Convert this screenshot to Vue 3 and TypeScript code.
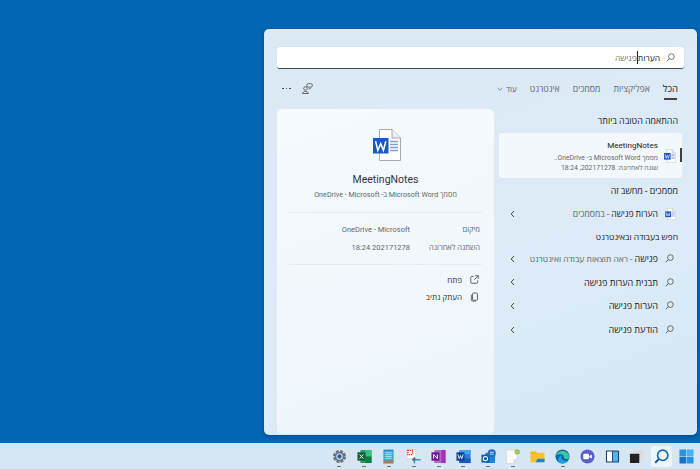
<script setup lang="ts">
interface SearchRow {
  id: number
  label: string
  hint?: string
}

const webRows: SearchRow[] = [
  { id: 1, label: 'פגישה', hint: ' - ראה תוצאות עבודה ואינטרנט' },
  { id: 2, label: 'תבנית הערות פגישה' },
  { id: 3, label: 'הערות פגישה' },
  { id: 4, label: 'הודעת פגישה' }
]

const tabs = ['אפליקציות', 'מסמכים', 'אינטרנט']
</script>

<template>
  <div class="screen">
    <svg class="defs" width="0" height="0" aria-hidden="true">
      <symbol id="doc" viewBox="0 0 28 32">
        <path d="M6.5 .5H19L27.5 9V31.5H6.5Z" fill="#fff" stroke="#a9a9a9" />
        <path d="M19 .5V9H27.5" fill="#eee" stroke="#a9a9a9" />
        <path d="M17 12.5h8M17 15.5h8M17 18.5h8M17 21.5h8" stroke="#7f9fd6" stroke-width="1.6" />
        <rect x="0" y="9" width="15.5" height="15.5" fill="#185abd" />
        <path d="M2.6 12.2 4.8 21.4 7.7 14.6 10.4 21.4 12.8 12.2" fill="none" stroke="#fff" stroke-width="1.5" />
      </symbol>
      <symbol id="lens" viewBox="0 0 12 12">
        <circle cx="7.2" cy="4.8" r="3.8" fill="none" stroke="#444" stroke-width="1" />
        <path d="M4.4 7.5 1 11" stroke="#444" stroke-width="1.1" />
      </symbol>
      <symbol id="chev" viewBox="0 0 5 8">
        <path d="M4 1 1.200 4 4 7" fill="none" stroke="#444" stroke-width="1" />
      </symbol>
    </svg>

    <div class="desktop">
      <section class="panel" dir="rtl">
        <div class="search">
          <svg class="search-icon"><use href="#lens" /></svg>
          <span class="typed">הערות</span><span class="caret"></span><span class="ghost">פגישה</span>
        </div>

        <div class="tabs">
          <span class="tab active">הכל</span>
          <span v-for="t in tabs" :key="t" class="tab">{{ t }}</span>
          <span class="tab more">עוד
            <svg width="6" height="4" viewBox="0 0 6 4"><path d="M.5 .7 3 3.3 5.5 .7" fill="none" stroke="#666" stroke-width=".7" /></svg>
          </span>
          <span class="tab-tools">
            <svg width="11" height="11" viewBox="0 0 11 11" fill="none" stroke="#555" stroke-width=".9">
              <circle cx="3.500" cy="5.500" r="1.800" />
              <path d="M.6 10.500c.2-1.500 1.200-2 2.900-2s2.700.5 2.900 2z" />
              <rect x="4.800" y=".6" width="5.600" height="3.600" rx="1.800" />
              <path d="M6.800 5.800h2" />
            </svg>
            <span class="dots"><i></i><i></i><i></i></span>
          </span>
        </div>

        <div class="body">
          <div class="results">
            <div class="heading">ההתאמה הטובה ביותר</div>
            <div class="best">
              <span class="best-mark"></span>
              <svg class="file-icon"><use href="#doc" /></svg>
              <div class="best-text">
                <div class="best-title">MeetingNotes</div>
                <div class="best-sub">מסמך Microsoft Word ב- OneDrive..</div>
                <div class="best-sub">שונה לאחרונה: 202171278, 18:24</div>
              </div>
            </div>

            <div class="heading heading-docs">מסמכים - מחשב זה</div>
            <div class="row doc-row">
              <svg class="file-icon"><use href="#doc" /></svg>
              <span class="row-label">הערות פגישה<span class="hint"> - במסמכים</span></span>
              <svg class="chev"><use href="#chev" /></svg>
            </div>

            <div class="heading heading-web">חפש בעבודה ובאינטרנט</div>
            <div v-for="r in webRows" :key="r.id" class="row">
              <svg class="row-lens"><use href="#lens" /></svg>
              <span class="row-label">{{ r.label }}<span v-if="r.hint" class="hint">{{ r.hint }}</span></span>
              <svg class="chev"><use href="#chev" /></svg>
            </div>
          </div>

          <div class="detail">
            <svg class="detail-icon"><use href="#doc" /></svg>
            <div class="detail-title" dir="ltr">MeetingNotes</div>
            <div class="detail-sub">מסמך Microsoft Word ב- OneDrive - Microsoft</div>
            <div class="meta">
              <div class="meta-row"><span class="meta-key">מיקום</span><span class="meta-val">OneDrive - Microsoft</span></div>
              <div class="meta-row"><span class="meta-key">השתנה לאחרונה</span><span class="meta-val">202171278 18:24</span></div>
            </div>
            <div class="actions">
              <div class="action">
                <svg width="9" height="9" viewBox="0 0 10 10" fill="none" stroke="#444" stroke-width=".9">
                  <path d="M4 1.500H2a1.200 1.200 0 0 0-1.200 1.200V8A1.200 1.200 0 0 0 2 9.200h5.300A1.200 1.200 0 0 0 8.500 8V6" />
                  <path d="M5.800.8h3.400v3.400M9.200.8 4.800 5.200" />
                </svg>
                <span>פתח</span>
              </div>
              <div class="action">
                <svg width="9" height="10" viewBox="0 0 10 10" fill="none" stroke="#444" stroke-width=".9">
                  <rect x="2.800" y=".6" width="5.600" height="8" rx="1.200" />
                  <path d="M1.500 2.500v5.600a1.400 1.400 0 0 0 1.400 1.400h3.500" />
                </svg>
                <span>העתק נתיב</span>
              </div>
            </div>
          </div>
        </div>
      </section>
    </div>

    <footer class="taskbar">
      <div class="tb-item running">
        <svg viewBox="0 0 16 16"><circle cx="8" cy="8" r="5.500" fill="none" stroke="#6b7480" stroke-width="3" stroke-dasharray="3 1.300" /><circle cx="8" cy="8" r="4.300" fill="none" stroke="#69717c" stroke-width="1.800" /><circle cx="8" cy="8" r="2.300" fill="#2563a8" /></svg>
      </div>
      <div class="tb-item running">
        <svg viewBox="0 0 16 16"><rect x="3.500" y="1" width="12" height="14" rx="1" fill="#21a366" /><rect x="9" y="1" width="6.500" height="7" fill="#33c481" /><rect x="9" y="8" width="6.500" height="7" fill="#107c41" /><rect x=".5" y="3.500" width="8.500" height="9" fill="#185c37" /><path d="M2.800 5.800 6.800 10.200M6.800 5.800 2.800 10.200" stroke="#fff" stroke-width="1" /></svg>
      </div>
      <div class="tb-item running">
        <svg viewBox="0 0 16 16"><rect x="2.500" y=".5" width="11" height="12.500" rx=".8" fill="#39a9dc" /><rect x="2.500" y="12.500" width="11" height="3" fill="#b07a45" /><path d="M4.500 4h7M4.500 6h7M4.500 8h7M4.500 10h7" stroke="#d6eefa" stroke-width=".8" /><path d="M3.500 1.500h9" stroke="#1478b0" stroke-width="1" stroke-dasharray="1 .6" /></svg>
      </div>
      <div class="tb-item running">
        <svg viewBox="0 0 16 16"><rect x="1" y=".5" width="9.500" height="10" fill="#fff" stroke="#c9c9c9" stroke-width=".6" /><rect x="2" y="1.500" width="5" height="4.500" fill="none" stroke="#d83b01" stroke-width="1.500" stroke-dasharray="1.200 .8" /><path d="M9 8.500V15.500M6.500 11.500h9" stroke="#2b9ad6" stroke-width="1.600" /><circle cx="8.500" cy="11" r="1.700" fill="#6a6a6a" /></svg>
      </div>
      <div class="tb-item running">
        <svg viewBox="0 0 16 16"><rect x="3.500" y="1" width="12" height="14" rx="1" fill="#ba68c8" /><rect x="11" y="1" width="4.500" height="14" fill="#a033b8" /><rect x=".5" y="3.500" width="8.500" height="9" fill="#6a1b9a" /><path d="M2.800 10.200V5.800L6.800 10.200V5.800" fill="none" stroke="#fff" stroke-width="1" /></svg>
      </div>
      <div class="tb-item running">
        <svg viewBox="0 0 16 16"><rect x="3.500" y="1" width="12" height="14" rx="1" fill="#2b7cd3" /><rect x="3.500" y="1" width="12" height="4.500" fill="#41a5ee" /><rect x="3.500" y="10" width="12" height="5" fill="#185abd" /><rect x=".5" y="3.500" width="8.500" height="9" fill="#103f91" /><path d="M2 5.800 3.400 10.300 4.800 7 6.200 10.300 7.600 5.800" fill="none" stroke="#fff" stroke-width=".9" /></svg>
      </div>
      <div class="tb-item running">
        <svg viewBox="0 0 16 16"><rect x="4.500" y="4" width="10.500" height="11" rx="1" fill="#1a86d9" /><rect x=".5" y="6" width="8.500" height="8.500" fill="#0f5ea8" /><circle cx="4.700" cy="10.200" r="2.300" fill="none" stroke="#fff" stroke-width="1.100" /><circle cx="11.500" cy="4.500" r="4.300" fill="#1f6fc0" /><path d="M9.500 3.500h4M9.500 5.500h4" stroke="#fff" stroke-width=".8" /></svg>
      </div>
      <div class="tb-item running">
        <svg viewBox="0 0 16 16"><path d="M1.500 1H13V11L9 15.500H1.500Z" fill="#fafafa" stroke="#cfcfcf" stroke-width=".6" /><path d="M9 15.500V11H13" fill="#ddd" /><circle cx="13" cy="3" r="2.800" fill="#8cbf3f" /><path d="M11.700 3 12.700 4 14.300 2.200" fill="none" stroke="#fff" stroke-width=".7" /></svg>
      </div>
      <div class="tb-item">
        <svg viewBox="0 0 16 16"><path d="M.5 3.500A1 1 0 0 1 1.500 2.500H6L7.500 4H14.500A1 1 0 0 1 15.500 5V13A1 1 0 0 1 14.500 14H1.500A1 1 0 0 1 .5 13Z" fill="#fbc02d" /><path d="M6 14 8 10.500H15.500V13A1 1 0 0 1 14.500 14Z" fill="#1e88c9" /><path d="M.5 4.500H7.500" stroke="#e5a21c" stroke-width=".8" /></svg>
      </div>
      <div class="tb-item running">
        <svg viewBox="0 0 16 16"><circle cx="8" cy="8" r="7.500" fill="#0c66a8" /><path d="M.7 7C2.500 .5 14 0 15.500 8.500c.2 2-2.500 2.800-4.500 2-2.500-1-.5-3.500-3-4.500C5.500 5 1.700 6 .7 7Z" fill="#3bc7a0" /><path d="M5 15C2 12.500 3.200 7.500 7 7.200 6 10 8.500 13.500 14 12.500 11.500 15.500 7.500 16 5 15Z" fill="#1a9fe0" /></svg>
      </div>
      <div class="tb-item">
        <svg viewBox="0 0 16 16"><circle cx="8" cy="8" r="7.500" fill="#5b5fc7" /><rect x="3.500" y="5" width="6" height="6" rx="1.300" fill="#fff" /><path d="M10 7.500 12.600 5.800V10.200L10 8.700Z" fill="#fff" /></svg>
      </div>
      <div class="tb-item">
        <svg viewBox="0 0 16 16"><rect x="1" y="1.500" width="14" height="13" rx="1" fill="#0f4c81" /><rect x="2.200" y="2.700" width="5.300" height="10.600" fill="#fff" /><rect x="8.500" y="2.700" width="5.300" height="10.600" fill="#5ab0e6" /></svg>
      </div>
      <div class="tb-item">
        <svg viewBox="0 0 16 16"><rect x="5" y="1" width="10.500" height="10.500" rx="1" fill="#dcdcdc" /><rect x="1" y="5" width="10" height="10" rx=".6" fill="#222" /></svg>
      </div>
      <div class="tb-item current">
        <svg viewBox="0 0 16 16" fill="none"><circle cx="9.300" cy="6.700" r="5.500" stroke="#0f6cbd" stroke-width="1.700" /><path d="M5.200 10.800 1.300 14.700" stroke="#0b4f8f" stroke-width="2" /></svg>
      </div>
      <div class="tb-item">
        <svg viewBox="0 0 16 16"><rect x=".5" y=".5" width="7.200" height="7.200" fill="#2a93e0" /><rect x="8.300" y=".5" width="7.200" height="7.200" fill="#4cb0ef" /><rect x=".5" y="8.300" width="7.200" height="7.200" fill="#1573c4" /><rect x="8.300" y="8.300" width="7.200" height="7.200" fill="#2a93e0" /></svg>
      </div>
    </footer>
  </div>
</template>

<style scoped>
.screen {
  width: 700px;
  height: 469px;
  display: flex;
  flex-direction: column;
  overflow: hidden;
  background: #0066b5;
  font-family: Roboto, "Open Sans", "Liberation Sans", sans-serif;
  color: #222;
}

.defs {
  position: absolute;
}

.desktop {
  height: 443px;
  padding: 29px 3px 8px 264px;
  box-sizing: border-box;
}

.panel {
  height: 100%;
  box-sizing: border-box;
  padding: 18px 13px 1px;
  display: flex;
  flex-direction: column;
  background: linear-gradient(160deg, #dbe9f5, #dcebf7 60%, #d6e7f5);
  border-radius: 5px;
  box-shadow: 0 1px 4px rgba(0, 30, 70, .45);
}

.search {
  height: 22px;
  box-sizing: border-box;
  display: flex;
  align-items: center;
  padding-right: 9px;
  background: #fff;
  border-radius: 3px;
  border-bottom: 1px solid #3a4a58;
  font-size: 8.500px;
  box-shadow: 0 0 1px #b5c7d6;
}

.search-icon {
  width: 9px;
  height: 9px;
  margin-left: 6px;
}

.typed {
  color: #222;
}

.caret {
  width: 1px;
  height: 13px;
  background: #222;
}

.ghost {
  color: #777;
}

.tabs {
  height: 39px;
  display: flex;
  align-items: center;
  padding: 0 6px 1px 0;
  gap: 13px;
  font-size: 8.700px;
  color: #666;
}

.tab {
  position: relative;
  white-space: nowrap;
}

.tab.active {
  color: #222;
  font-size: 9.500px;
}

.tab.active::after {
  content: "";
  position: absolute;
  left: 1px;
  right: 1px;
  bottom: -5px;
  height: 2px;
  background: #444;
}

.more {
  font-size: 8px;
  display: flex;
  align-items: center;
  gap: 3px;
}

.tab-tools {
  margin-right: auto;
  display: flex;
  align-items: center;
  gap: 11px;
  margin-left: 5px;
}

.dots {
  display: flex;
  gap: 2px;
}

.dots i {
  width: 1.500px;
  height: 1.500px;
  border-radius: 50%;
  background: #333;
}

.body {
  flex: 1;
  min-height: 0;
  display: flex;
  gap: 5px;
}

.results {
  width: 183px;
  margin-right: 2px;
  flex-shrink: 0;
}

.heading {
  font-size: 8.900px;
  height: 12px;
  line-height: 12px;
  padding: 6px 4px 4px 0;
  box-sizing: content-box;
  color: #222;
}

.heading-docs {
  padding-bottom: 5px;
}

.heading-web {
  padding-top: 5px;
  font-size: 8.500px;
}

.best {
  position: relative;
  height: 45px;
  margin: 2px 0 1px;
  box-sizing: border-box;
  display: flex;
  align-items: center;
  padding-right: 6px;
  background: #f3f8fc;
  border-radius: 3px;
}

.best-mark {
  position: absolute;
  right: 0;
  top: 15px;
  width: 2px;
  height: 14px;
  background: #3a3f44;
}

.file-icon {
  width: 12px;
  height: 14px;
  margin-left: 6px;
  flex-shrink: 0;
}

.best-text {
  min-width: 0;
}

.best-title {
  font-size: 8.100px;
  line-height: 13px;
  margin-bottom: 1px;
  color: #222;
  direction: ltr;
  text-align: right;
}

.best-sub {
  font-size: 6.800px;
  line-height: 10px;
  color: #666;
  white-space: nowrap;
}

.row {
  height: 23.700px;
  display: flex;
  align-items: center;
  padding-right: 8px;
  font-size: 9.100px;
}

.row-lens {
  width: 9px;
  height: 9px;
  margin-left: 7px;
  flex-shrink: 0;
}

.doc-row {
  padding-right: 6px;
  font-size: 8.600px;
}

.doc-row .file-icon {
  width: 11px;
  height: 12px;
  margin-left: 7px;
}

.row-label {
  flex: 1;
  white-space: nowrap;
}

.hint {
  color: #666;
  font-size: 8.500px;
}

.doc-row .hint {
  font-size: 8.600px;
}

.chev {
  width: 5px;
  height: 8px;
  margin-left: 11px;
  flex-shrink: 0;
}

.detail {
  flex: 1;
  min-width: 0;
  background: linear-gradient(160deg, #f5fafd, #eef5fb);
  border-radius: 5px;
  display: flex;
  flex-direction: column;
  align-items: center;
  padding: 20px 12px 0;
}

.detail-icon {
  width: 28px;
  height: 32px;
  margin-left: 2px;
}

.detail-title {
  margin-top: 11px;
  font-size: 10.500px;
  line-height: 16px;
  color: #333;
}

.detail-sub {
  margin-top: 1px;
  font-size: 7.200px;
  line-height: 11px;
  color: #666;
  white-space: nowrap;
}

.meta {
  width: 100%;
  margin-top: 12px;
  padding: 7px 0 8px;
  border-top: 1px solid #e5ecf2;
  border-bottom: 1px solid #e5ecf2;
}

.meta-row {
  height: 18px;
  display: flex;
  align-items: center;
  font-size: 7.500px;
  color: #666;
}

.meta-key {
  width: 70px;
  padding-right: 2px;
  flex-shrink: 0;
  white-space: nowrap;
}

.meta-val {
  color: #666;
  white-space: nowrap;
}

.actions {
  width: 100%;
  padding: 6px 3px 0 0;
  box-sizing: border-box;
}

.action {
  height: 17px;
  display: flex;
  align-items: center;
  gap: 8px;
  font-size: 8px;
  color: #333;
}

.taskbar {
  flex: 1;
  display: flex;
  align-items: center;
  justify-content: flex-end;
  padding-right: 3px;
  background: #d6e6f3;
  gap: 3.800px;
}

.tb-item {
  position: relative;
  width: 21px;
  height: 21px;
  display: flex;
  align-items: center;
  justify-content: center;
  border-radius: 3px;
}

.tb-item svg {
  width: 15px;
  height: 15px;
}

.tb-item.running::after {
  content: "";
  position: absolute;
  bottom: 0;
  left: 8.500px;
  width: 4px;
  height: 1px;
  background: #6a7580;
}

.tb-item.current {
  background: #eef5fb;
}
</style>
